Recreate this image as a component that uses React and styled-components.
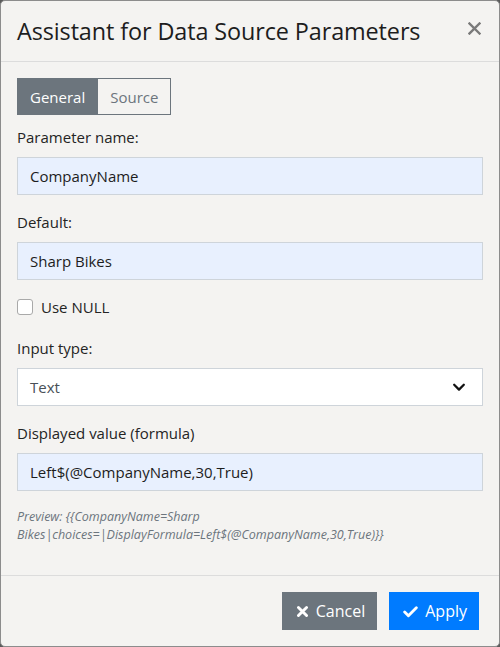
import React from "react";
import styled, { createGlobalStyle } from "styled-components";

const GlobalStyle = createGlobalStyle`
  html, body {
    margin: 0;
    padding: 0;
    background: #5a5a5a;
  }
  * {
    box-sizing: border-box;
  }
`;

const previewText =
  "Preview: {{CompanyName=Sharp Bikes|choices=|DisplayFormula=Left$(@CompanyName,30,True)}}";

const App = () => {
  return (
    <>
      <GlobalStyle />
      <Dialog>
        <Header>
          <Title>Assistant for Data Source Parameters</Title>
          <CloseButton aria-label="Close">
            <svg width="13" height="13" viewBox="0 0 13 13">
              <path
                d="M1.5 1.5 L11.5 11.5 M11.5 1.5 L1.5 11.5"
                stroke="#7a7a7a"
                strokeWidth="2.4"
                strokeLinecap="square"
              />
            </svg>
          </CloseButton>
        </Header>
        <Body>
          <Tabs>
            <Tab active>General</Tab>
            <Tab>Source</Tab>
          </Tabs>
          <Group>
            <Label>Parameter name:</Label>
            <Input defaultValue="CompanyName" />
          </Group>
          <Group>
            <Label>Default:</Label>
            <Input defaultValue="Sharp Bikes" />
          </Group>
          <CheckRow>
            <CheckBox type="checkbox" />
            <span>Use NULL</span>
          </CheckRow>
          <Group>
            <Label>Input type:</Label>
            <SelectBox>
              <span>Text</span>
              <svg width="14" height="14" viewBox="0 0 16 16">
                <path
                  d="M2.5 5.5 L8 11 L13.5 5.5"
                  fill="none"
                  stroke="#111"
                  strokeWidth="2.6"
                  strokeLinecap="round"
                  strokeLinejoin="round"
                />
              </svg>
            </SelectBox>
          </Group>
          <Group>
            <Label>Displayed value (formula)</Label>
            <Input defaultValue="Left$(@CompanyName,30,True)" />
          </Group>
          <Preview>{previewText}</Preview>
        </Body>
        <Footer>
          <Button variant="secondary">
            <svg width="13" height="13" viewBox="0 0 16 16">
              <path
                d="M3 3 L13 13 M13 3 L3 13"
                stroke="#fff"
                strokeWidth="3.6"
                strokeLinecap="round"
              />
            </svg>
            Cancel
          </Button>
          <Button variant="primary">
            <svg width="15" height="13" viewBox="0 0 18 14">
              <path
                d="M2 7.5 L6.5 12 L16 2.5"
                fill="none"
                stroke="#fff"
                strokeWidth="3.4"
                strokeLinecap="round"
                strokeLinejoin="round"
              />
            </svg>
            Apply
          </Button>
        </Footer>
      </Dialog>
    </>
  );
};

const Dialog = styled.div`
  width: 500px;
  height: 647px;
  background: #f4f3f1;
  border: 1px solid #8c8c8c;
  border-radius: 5px;
  display: flex;
  flex-direction: column;
  font-family: "Open Sans", "Noto Sans", sans-serif;
  color: #212529;
  overflow: hidden;
`;

const Header = styled.div`
  height: 61px;
  border-bottom: 1px solid #dcdcdc;
  display: flex;
  align-items: center;
  justify-content: space-between;
  padding: 0 18px 0 16px;
  flex-shrink: 0;
`;

const Title = styled.h5`
  margin: 0;
  font-size: 23.4px;
  font-weight: 400;
  line-height: 1.2;
  color: #1d1d1d;
  letter-spacing: -0.1px;
`;

const CloseButton = styled.button`
  display: flex;
  border: none;
  background: transparent;
  padding: 0;
  margin-top: -6px;
  cursor: pointer;
`;

const Body = styled.div`
  flex: 1;
  padding: 16px 16px 0;
  font-size: 15px;
`;

const Tabs = styled.div`
  display: flex;
  margin-bottom: 10px;
`;

const Tab = styled.button`
  height: 37px;
  padding: 0 12px;
  font-family: inherit;
  font-size: 15px;
  border: 1px solid #6c757d;
  border-radius: 0;
  background: ${(p) => (p.active ? "#6c757d" : "transparent")};
  color: ${(p) => (p.active ? "#fff" : "#6c757d")};
  & + & {
    border-left: none;
  }
`;

const Group = styled.div`
  margin-bottom: 15px;
`;

const Label = styled.label`
  display: block;
  line-height: 24px;
  margin-bottom: 8px;
  color: #242424;
`;

const Input = styled.input`
  display: block;
  width: 100%;
  height: 38px;
  padding: 0 12px;
  font-family: inherit;
  font-size: 15px;
  color: #1d1d1d;
  background: #e8f0fe;
  border: 1px solid #ced4da;
  border-radius: 0;
  outline: none;
`;

const SelectBox = styled.div`
  display: flex;
  align-items: center;
  justify-content: space-between;
  height: 38px;
  padding: 0 16px 0 12px;
  background: #fff;
  border: 1px solid #ced4da;
  color: #495057;
`;

const CheckRow = styled.label`
  display: flex;
  align-items: center;
  gap: 8px;
  line-height: 24px;
  margin-bottom: 17px;
  color: #242424;
`;

const CheckBox = styled.input`
  appearance: none;
  width: 16px;
  height: 16px;
  margin: 0;
  border: 1px solid #a9a9a9;
  border-radius: 3px;
  background: #fff;
`;

const Preview = styled.div`
  font-size: 12.5px;
  line-height: 18px;
  font-style: italic;
  color: #6c757d;
  padding-right: 100px;
  margin-top: 17px;
`;

const Footer = styled.div`
  border-top: 1px solid #dcdcdc;
  display: flex;
  justify-content: flex-end;
  gap: 12px;
  padding: 16px 20px 16px 16px;
  flex-shrink: 0;
`;

const Button = styled.button`
  height: 38px;
  display: flex;
  align-items: center;
  gap: 7px;
  padding: 0 12px 0 14px;
  font-family: inherit;
  font-size: 16px;
  border: none;
  border-radius: 0;
  color: #fff;
  background: ${(p) => (p.variant === "primary" ? "#007bff" : "#6c757d")};
  cursor: pointer;
`;

export default App;
